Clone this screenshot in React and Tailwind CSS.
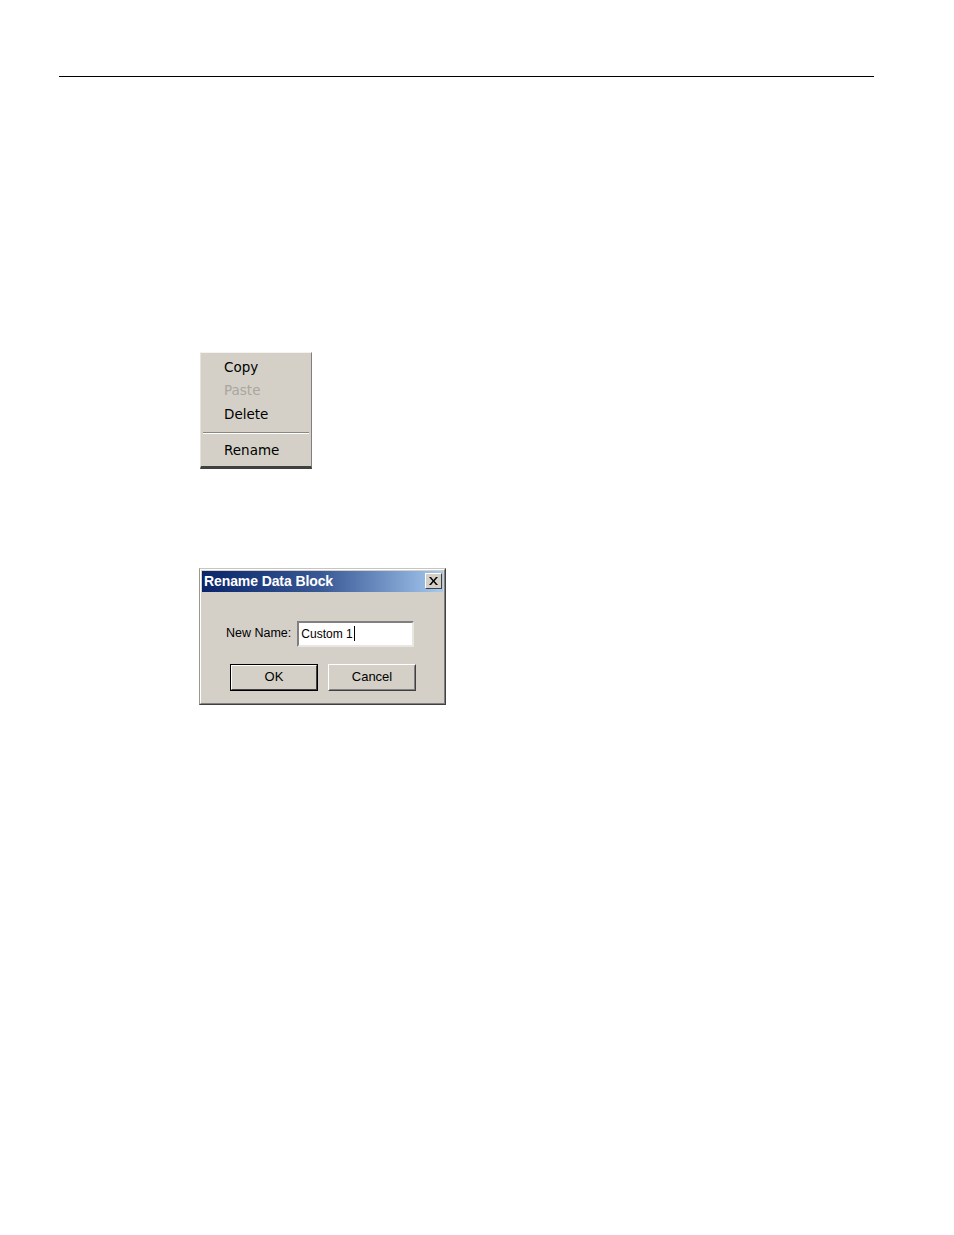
export default function App() {
  const menuItems = [
    { label: 'Copy', off: false },
    { label: 'Paste', off: true },
    { label: 'Delete', off: false },
  ]

  return (
    <div className="w-[954px] h-[1235px] bg-white overflow-hidden" style={{ fontFamily: '"Liberation Sans", Arial, sans-serif' }}>
      {/* page rule */}
      <div className="pt-[76px]">
        <div className="ml-[59px] w-[815px] h-px bg-black" />
      </div>

      {/* context menu */}
      <div className="mt-[275px] ml-[200px] w-[112px] bg-[#d4d0c8] border border-t-[#f4f3ef] border-l-[#e6e3dc] border-r-[#808080] border-b-[#404040] border-b-[3px] pt-[2px] pb-[4px] font-['DejaVu_Sans',sans-serif] text-[13.5px]">
        {menuItems.map(m => (
          <div key={m.label} className={`h-[23.5px] flex items-center pl-[23px] ${m.off ? 'text-[#a9a69f]' : 'text-black'}`}>
            {m.label}
          </div>
        ))}
        <div className="mx-[2px] my-[6px] border-t border-t-[#8a8780] border-b border-b-white" />
        <div className="h-[22px] flex items-center pl-[23px] text-black">Rename</div>
      </div>

      {/* rename dialog */}
      <div className="mt-[99px] ml-[199px] w-[247px] bg-[#d4d0c8] border border-t-[#c8c5be] border-l-[#9a978f] border-r-[#404040] border-b-[#404040]">
        <div className="border border-t-white border-l-white border-r-[#808080] border-b-[#808080] p-[1px] pb-[12px]">
          <div className="h-[21px] flex items-center justify-between bg-gradient-to-r from-[#0a246a] via-[#3a5a96] to-[#a6caf0] pl-[2px] pr-[1px]">
            <span className="text-white font-bold text-[14px] tracking-[-0.1px]">Rename Data Block</span>
            <div className="w-[17px] h-[16px] bg-[#d4d0c8] border border-t-white border-l-white border-r-[#404040] border-b-[#404040] flex items-center justify-center">
              <svg width="9" height="8" viewBox="0 0 9 8">
                <path d="M0 0 L2 0 L4.5 3 L7 0 L9 0 L5.5 4 L9 8 L7 8 L4.5 5 L2 8 L0 8 L3.5 4 Z" fill="black" />
              </svg>
            </div>
          </div>

          <div className="flex items-center pl-[24px] pt-[29px]">
            <span className="text-[12.5px] text-black">New Name:</span>
            <div className="ml-[6px] w-[117px] h-[26px] bg-white border-2 border-t-[#808080] border-l-[#808080] border-r-[#e8e6e0] border-b-[#e8e6e0] flex items-center pl-[2px]">
              <span className="text-[12px] text-black">Custom 1</span>
              <span className="ml-[1px] w-px h-[15px] bg-black" />
            </div>
          </div>

          <div className="flex pl-[28px] pt-[17px] gap-[10px]">
            <div className="w-[88px] h-[27px] border border-black">
              <div className="h-full border border-t-white border-l-white border-r-[#404040] border-b-[#404040] flex items-center justify-center text-[13px] text-black">
                OK
              </div>
            </div>
            <div className="w-[88px] h-[27px] border border-t-white border-l-white border-r-[#404040] border-b-[#404040]">
              <div className="h-full border border-transparent border-r-[#808080] border-b-[#808080] flex items-center justify-center text-[13px] text-black">
                Cancel
              </div>
            </div>
          </div>
        </div>
      </div>
    </div>
  )
}
